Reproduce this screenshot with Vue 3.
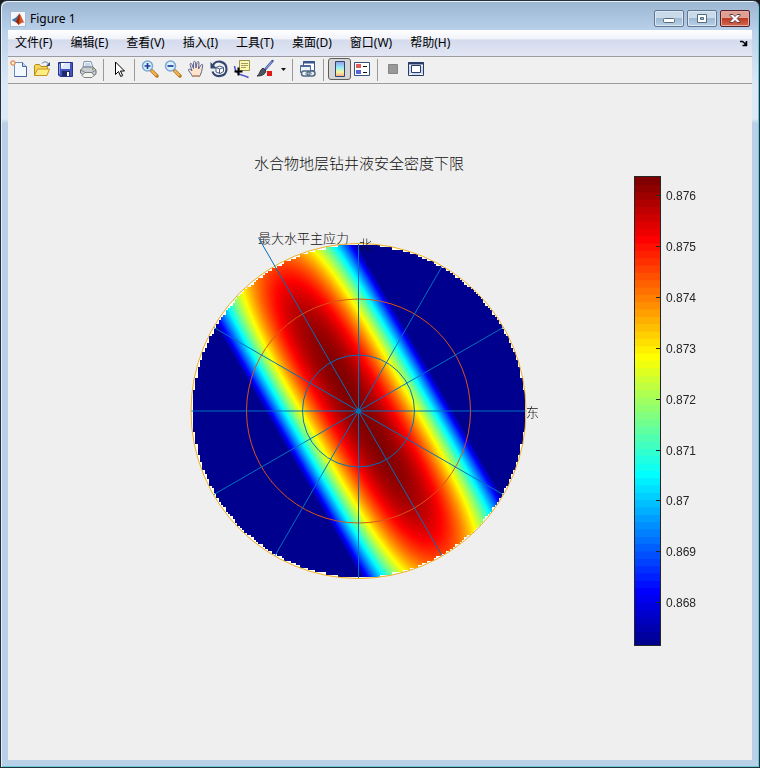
<script setup>
import { onMounted, ref } from 'vue'

const menus = ['文件(F)', '编辑(E)', '查看(V)', '插入(I)', '工具(T)', '桌面(D)', '窗口(W)', '帮助(H)']

const cx = 358.5
const cy = 411
const radius = 167
const size = 336
const heat = ref(null)

const clamp = (v) => Math.min(1, Math.max(0, v))
const jet = (t) => [
  Math.round(255 * clamp(1.5 - Math.abs(4 * t - 3))),
  Math.round(255 * clamp(1.5 - Math.abs(4 * t - 2))),
  Math.round(255 * clamp(1.5 - Math.abs(4 * t - 1)))
]

const top = 177
const barHeight = 469
const bands = Array.from({ length: 64 }, (_, i) => ({
  y: top + ((63 - i) * barHeight) / 64,
  fill: `rgb(${jet((i + 1) / 64).join(',')})`
}))

const ticks = ['0.876', '0.875', '0.874', '0.873', '0.872', '0.871', '0.87', '0.869', '0.868'].map(
  (label, i) => ({ label, y: Math.round(195 + i * 50.9) })
)

const spokes = Array.from({ length: 12 }, (_, i) => {
  const a = (i * Math.PI) / 6
  const r = i === 4 ? 200 : radius
  return { x: cx + r * Math.cos(a), y: cy - r * Math.sin(a) }
})

// Density limit over the well direction, u along and v across the stress axis
function level(x, y) {
  const u = -0.5 * x - 0.866 * y
  const v = 0.866 * x - 0.5 * y
  const fall = 0.19 * Math.pow(Math.abs(u) / radius, 3.5)
  return Math.min(1, Math.max(1 / 64, (1 - fall) * (1 - (v / 82) ** 2)))
}

onMounted(() => {
  const ctx = heat.value.getContext('2d')
  const img = ctx.createImageData(size, size)
  const cell = 2.34
  for (let j = 0; j < size; j++) {
    for (let i = 0; i < size; i++) {
      const x = i + 0.5 - size / 2
      const y = j + 0.5 - size / 2
      const gx = Math.ceil(Math.abs(x) / cell) * cell
      const gy = Math.ceil(Math.abs(y) / cell) * cell
      if (Math.hypot(gx, gy) > radius + 0.5) continue
      const [r, g, b] = jet(level(x, y))
      img.data.set([r, g, b, 255], (j * size + i) * 4)
    }
  }
  ctx.putImageData(img, 0, 0)
})
</script>

<template>
  <div class="window">
    <header class="titlebar">
      <svg class="logo" width="16" height="16" viewBox="0 0 16 16" aria-hidden="true">
        <rect x=".5" y=".5" width="15" height="15" fill="#f4f7fb" stroke="#a9bccf" />
        <path d="M1.5 9 6 6.5 8 8 5 11z" fill="#3f78b5" />
        <path d="M6 6.500 9.500 2.500 8.500 8.500 5 11z" fill="#5c6c80" />
        <path d="M9.500 2.500C11 4 12.500 9 14.500 12 12 10.500 10.500 13 8.500 14 7.500 12 6.500 11 5 11 8 9.500 8.500 4 9.500 2.500z" fill="#d9541e" />
        <path d="M9.500 2.500C9.500 6 10 9 8.500 14 7.500 12 6.500 11 5 11 8 9.500 8.500 4 9.500 2.500z" fill="#8c2412" />
      </svg>
      <h1>Figure 1</h1>
      <div class="controls">
        <button class="ctl" aria-label="最小化">
          <svg width="12" height="11" viewBox="0 0 12 11"><rect x=".5" y="5.500" width="11" height="4" rx="1" fill="#fff" stroke="#566a80" /></svg>
        </button>
        <button class="ctl" aria-label="最大化">
          <svg width="12" height="11" viewBox="0 0 12 11"><path d="M1.500 1.500h9v8h-9zM4.500 4.500v2h3v-2z" fill="#fff" fill-rule="evenodd" stroke="#566a80" /></svg>
        </button>
        <button class="ctl close" aria-label="关闭">
          <svg width="12" height="11" viewBox="0 0 12 11"><path d="M1 1.500h3l2 2 2-2h3v1L8.200 5.500 11 8.500v1H8l-2-2-2 2H1v-1l2.800-3L1 2.500z" fill="#fff" stroke="#5e3a42" /></svg>
        </button>
      </div>
    </header>

    <div class="client">
      <nav class="menubar">
        <button v-for="m in menus" :key="m" class="menu">{{ m }}</button>
        <button class="dock" aria-label="停靠">
          <svg width="8" height="7" viewBox="0 0 8 7"><path d="M0 1.500h2.500L5 3.500M6.500 1v5M2.500 5.500H7M5 2.500v3" fill="none" stroke="#000" stroke-width="1.500" /></svg>
        </button>
      </nav>

      <div class="toolbar" role="toolbar">
        <button class="tool" aria-label="新建">
          <svg viewBox="0 0 20 20">
            <path d="M5.500 3.500h8l4 4v10h-12z" fill="#f3f8ff" stroke="#6d8fc4" />
            <path d="M13.500 3.500v4h4" fill="#bdd5f2" stroke="#44659e" />
            <path d="M17.500 8v9.500h-12" fill="none" stroke="#44659e" />
            <path d="M4 1v6M1 4h6M2 2l4 4M6 2 2 6" stroke="#e08a5c" stroke-width="1.300" />
            <circle cx="4" cy="4" r="1.500" fill="#fff1c8" />
          </svg>
        </button>
        <button class="tool" aria-label="打开">
          <svg viewBox="0 0 20 20">
            <path d="M2.500 16.500V6.500l1-1h4l1.500 2h6.500v3" fill="#f5d75e" stroke="#b58a1b" />
            <path d="M2.500 16.500 5.500 10h12l-2.500 6.500z" fill="#ffed83" stroke="#c3951f" />
            <path d="M10 4.500c2-2.500 5-2 6.500.5" fill="none" stroke="#54719f" />
            <path d="M18 3v4h-4z" fill="#3b5580" />
          </svg>
        </button>
        <button class="tool" aria-label="保存">
          <svg viewBox="0 0 20 20">
            <path d="M3.500 3.500h14v14H5l-1.500-1.500z" fill="#4055be" stroke="#27348c" />
            <path d="M6 4h9v6H6z" fill="#dce7fc" />
            <path d="M6 4h4l-4 5z" fill="#fff" />
            <path d="M7 12h8v5H7z" fill="#202968" />
            <path d="M12 13h2v4h-2z" fill="#fff" />
            <path d="M4.500 5v10" stroke="#8ba0ec" />
          </svg>
        </button>
        <button class="tool" aria-label="打印">
          <svg viewBox="0 0 20 20">
            <path d="M5 8 6 2.500h7l2 6z" fill="#edf5ff" stroke="#8595aa" />
            <path d="M7 5h5M7 7h6" stroke="#a3b7d4" />
            <path d="m2.500 11 3-3h9.500l3 3v4l-4 2.500H7L2.500 14z" fill="#c9ccd1" stroke="#6e747d" />
            <path d="m3 11 4 2.500h7l4-2.500" fill="none" stroke="#7b818a" />
            <path d="M7 13.500h7l2 3-2 2H6l-2-2z" fill="#f4f4ef" stroke="#7d8187" />
            <path d="M14 10h1.500" stroke="#77a94d" stroke-width="2" />
          </svg>
        </button>
        <span class="sep"></span>
        <button class="tool" aria-label="选择">
          <svg viewBox="0 0 20 20"><path d="M6.500 3v12.500l3-3 2.200 5 2-.9-2.200-4.600h4z" fill="#fff" stroke="#000" /></svg>
        </button>
        <span class="sep"></span>
        <button class="tool" aria-label="放大">
          <svg viewBox="0 0 20 20">
            <path d="m11.500 11.500 5.500 5.500" stroke="#b67823" stroke-width="3.500" stroke-linecap="round" />
            <path d="m11.500 11.500 5 5" stroke="#f4b552" stroke-width="2" />
            <circle cx="7.500" cy="7" r="5" fill="#d9f2fe" stroke="#7ba7d2" stroke-width="1.500" />
            <path d="M7.500 4v6M4.500 7h6" stroke="#1c3d97" stroke-width="1.700" />
          </svg>
        </button>
        <button class="tool" aria-label="缩小">
          <svg viewBox="0 0 20 20">
            <path d="m11.500 11.500 5.500 5.500" stroke="#b67823" stroke-width="3.500" stroke-linecap="round" />
            <path d="m11.500 11.500 5 5" stroke="#f4b552" stroke-width="2" />
            <circle cx="7.500" cy="7" r="5" fill="#d9f2fe" stroke="#7ba7d2" stroke-width="1.500" />
            <path d="M4.500 7h6" stroke="#1c3d97" stroke-width="1.700" />
          </svg>
        </button>
        <button class="tool" aria-label="平移">
          <svg viewBox="0 0 20 20">
            <path d="M6.500 17.500C5.500 14.500 2 12 2.500 10.500c1-1.200 2.500.5 3.500 1.500L4 5.500C4 4 5.500 4 6 5.500l1.500 4L7.500 3.500c0-1.500 2-1.500 2 0l.5 5.500 1-5.500c.5-1.500 2-1 2 .5l-.5 6L15 6c.8-1.300 2-.7 1.700.7-.7 4-1.200 7.800-3.200 10.800z" fill="#ffe4cb" stroke="#54659a" />
            <path d="M7 17h6.500" stroke="#c69773" stroke-width="2" />
          </svg>
        </button>
        <button class="tool" aria-label="三维旋转">
          <svg viewBox="0 0 20 20">
            <path d="M4 6.500C7-.5 18 2.500 17.500 10.500 17 18 6 19.500 3.500 12.500" fill="none" stroke="#33466f" stroke-width="2.200" />
            <path d="M1.500 3v6.500h6.500z" fill="#33466f" />
            <path d="m7 8.500 4-1.500 3.500 1.500v4L11 14.500l-4-1.500zM7 8.500l3.500 1.500 4-1.500M10.500 10v4" fill="#fff" stroke="#445985" />
          </svg>
        </button>
        <button class="tool" aria-label="数据游标">
          <svg viewBox="0 0 20 20">
            <path d="M2.500 7c.5 5 3 8 7 9s5 1.500 7 2.500" fill="none" stroke="#4b4bc5" stroke-width="1.500" />
            <path d="M7.500 1.500h10v10h-10z" fill="#fcf8b3" stroke="#99964a" />
            <path d="M9 4.500h7M9 6.500h7M9 8.500h5" stroke="#a09e5e" />
            <path d="M6.500 8.500v8M2.500 12.500h8" stroke="#000" stroke-width="2" />
          </svg>
        </button>
        <button class="tool" aria-label="刷亮">
          <svg viewBox="0 0 20 20">
            <path d="m17.500 2-7 8" stroke="#4055a2" stroke-width="2.500" stroke-linecap="round" />
            <path d="m17 2.500-6 7" stroke="#a7b8f3" />
            <path d="m8 9 3 3c-1 4-5 5-9 5 3-1.500 2.500-6 6-8z" fill="#4d5463" stroke="#30333b" />
            <path d="M12 12h5v5h-5z" fill="#e01818" />
          </svg>
        </button>
        <button class="tool drop" aria-label="刷亮选项">
          <svg viewBox="0 0 12 20"><path d="M3 9h5l-2.500 3z" fill="#111" /></svg>
        </button>
        <span class="sep"></span>
        <button class="tool" aria-label="链接绘图">
          <svg viewBox="0 0 20 20">
            <path d="M5.500 2.500h11v9h-11z" fill="#fff" stroke="#36588e" />
            <path d="M5 3.500h12" stroke="#36588e" stroke-width="2" />
            <path d="M2.500 6.500h10v7h-10z" fill="#edf4fb" stroke="#4a6b99" />
            <path d="M3 7.500h10" stroke="#4a6b99" />
            <rect x="3.500" y="12" width="8" height="5" rx="2.500" fill="#f5f8fb" stroke="#526883" stroke-width="1.500" />
            <rect x="9" y="12" width="8" height="5" rx="2.500" fill="none" stroke="#526883" stroke-width="1.500" />
            <path d="M7 14.500h7" stroke="#8ea2b8" stroke-width="1.500" />
          </svg>
        </button>
        <span class="sep"></span>
        <button class="tool pressed" aria-label="插入颜色栏" aria-pressed="true">
          <svg viewBox="0 0 20 20">
            <defs>
              <linearGradient id="mini" x2="0" y2="1">
                <stop stop-color="#9a99e8" /><stop offset=".4" stop-color="#92edf6" />
                <stop offset=".7" stop-color="#f6f6a0" /><stop offset="1" stop-color="#f6aa88" />
              </linearGradient>
            </defs>
            <path d="M5.500 2.500h9v15h-9z" fill="url(#mini)" stroke="#2e4675" />
          </svg>
        </button>
        <button class="tool" aria-label="插入图例">
          <svg viewBox="0 0 20 20">
            <path d="M2.500 3.500h15v13h-15z" fill="#fff" stroke="#34527f" />
            <path d="M4 5h5v4H4z" fill="#dd5b58" /><path d="M4 11h5v4H4z" fill="#5866dc" />
            <path d="M11 7.500h4M11 13.500h4" stroke="#111" />
          </svg>
        </button>
        <span class="sep"></span>
        <button class="tool" aria-label="隐藏绘图工具">
          <svg viewBox="0 0 20 20"><path d="M5.500 5.500h9v9h-9z" fill="#999" stroke="#858585" /></svg>
        </button>
        <button class="tool" aria-label="显示绘图工具">
          <svg viewBox="0 0 20 20">
            <path d="M2.500 3.500h15v13h-15z" fill="#fff" stroke="#263c6b" />
            <path d="M2 4.500h16" stroke="#263c6b" stroke-width="2" />
            <path d="M5.500 6.500h9v7h-9z" fill="#fff" stroke="#263c6b" />
            <path d="M4 7v8M16 7v8M6 15h8" stroke="#9fb5d9" />
          </svg>
        </button>
      </div>

      <main class="figure">
        <svg class="plot" viewBox="8 84 744 676" role="img" aria-label="水合物地层钻井液安全密度下限">
          <text class="song heading" x="254" y="169">水合物地层钻井液安全密度下限</text>
          <text class="song" x="258" y="243">最大水平主应力</text>

          <circle :cx="cx" :cy="cy" :r="radius" fill="#fff" />
          <foreignObject x="191" y="243" :width="size" :height="size">
            <canvas ref="heat" class="heat" :width="size" :height="size"></canvas>
          </foreignObject>

          <g fill="none">
            <circle :cx="cx" :cy="cy" r="56" stroke="#0072bd" />
            <circle :cx="cx" :cy="cy" r="112" stroke="#d95319" />
            <circle :cx="cx" :cy="cy" :r="radius + 0.5" stroke="#edb120" />
            <line v-for="(s, i) in spokes" :key="i" :x1="cx" :y1="cy" :x2="s.x" :y2="s.y" stroke="#0072bd" />
          </g>
          <circle :cx="cx" :cy="cy" r="2.500" fill="#0072bd" />
          <text class="song" x="359" y="249">北</text>
          <text class="song" x="526" y="417">东</text>

          <rect v-for="b in bands" :key="b.y" x="634" :y="b.y" width="27" height="8" :fill="b.fill" />
          <path d="M634 646h27v2h-27z" fill="#efefef" />
          <rect x="634.500" y="176.500" width="26" height="469" fill="none" stroke="#262626" />
          <g v-for="t in ticks" :key="t.label">
            <path :d="`M656 ${t.y + 0.5}h5`" stroke="#262626" />
            <text class="tick" x="666" :y="t.y + 5">{{ t.label }}</text>
          </g>
        </svg>
      </main>
    </div>
  </div>
</template>

<style>
body {
  background: #1b1b20;
}
</style>

<style scoped>
.window {
  box-sizing: border-box;
  min-height: 100vh;
  display: flex;
  flex-direction: column;
  padding: 0 7px 7px;
  border: 1px solid #27303a;
  border-radius: 7px 7px 0 0;
  background: linear-gradient(#9bb5d1, #b9d1ea 30px, #dce9f6 84px, #dce9f6 118px, #b9d1e8 122px);
  box-shadow: inset 1px 1px 0 #e4f0fa, inset -1px -1px 0 #62cbd8;
  font-family: "Noto Sans", "Noto Sans CJK SC", sans-serif;
  font-size: 12px;
  color: #000;
}
button {
  margin: 0;
  padding: 0;
  border: 0;
  background: none;
  font: inherit;
  color: inherit;
}
svg {
  display: block;
}
.titlebar {
  display: flex;
  align-items: flex-start;
  height: 29px;
  padding: 0 2px;
}
.logo {
  margin-top: 10px;
}
.titlebar h1 {
  margin: 9px 0 0 4px;
  font-size: 12px;
  line-height: 18px;
  font-weight: 400;
}
.controls {
  display: flex;
  gap: 3px;
  margin: 9px 0 0 auto;
}
.ctl {
  box-sizing: border-box;
  display: grid;
  place-items: center;
  width: 30px;
  height: 17px;
  border: 1px solid #60788f;
  border-radius: 2px;
  background: linear-gradient(#c9daeb 48%, #a0bad5 50%, #b9d0e6);
  box-shadow: inset 0 0 0 1px #dce9f5;
}
.close {
  border-color: #58202a;
  background: linear-gradient(#dda093 48%, #bd3c24 50%, #d2694e);
  box-shadow: inset 0 0 0 1px #e2aaa0;
}
.client {
  flex: 1;
  display: flex;
  flex-direction: column;
  background: #efefef;
}
.menubar {
  display: flex;
  gap: 2px;
  height: 26px;
  border-bottom: 1px solid #9b9ba0;
  background: linear-gradient(#fff, #f1f3fa 34%, #d4dbec 38%, #e2e6f4);
}
.menu {
  padding: 0 8px 2px 7px;
  white-space: nowrap;
}
.menu + .menu {
  padding-left: 8px;
}
.dock {
  margin-left: auto;
  padding-right: 4px;
}
.toolbar {
  display: flex;
  height: 26px;
  border-bottom: 1px solid #9c9c9c;
  background: #f0f0f0;
}
.tool {
  box-sizing: border-box;
  display: grid;
  place-items: center start;
  width: 23px;
  height: 22px;
  margin-top: 1px;
  padding-left: 1px;
}
.tool svg {
  width: 20px;
  height: 20px;
}
.drop {
  width: 12px;
}
.drop svg {
  width: 12px;
}
.pressed {
  place-items: center;
  padding: 0;
  border: 1px solid #5d5d5d;
  border-radius: 3px;
  background: #d5d5d5;
}
.sep {
  width: 1px;
  height: 22px;
  margin: 2px 4px 0 3px;
  background: #9a9a9a;
}
.figure {
  flex: 1;
  display: grid;
}
.plot {
  width: 100%;
  height: 100%;
}
.heat {
  display: block;
}
.song {
  font-family: "Liberation Serif", "Noto Sans CJK SC", serif;
  font-size: 13px;
  font-weight: 300;
  fill: #111;
}
.heading {
  font-size: 15px;
}
.tick {
  font-family: "Liberation Sans", sans-serif;
  font-size: 12px;
  fill: #262626;
}
</style>
